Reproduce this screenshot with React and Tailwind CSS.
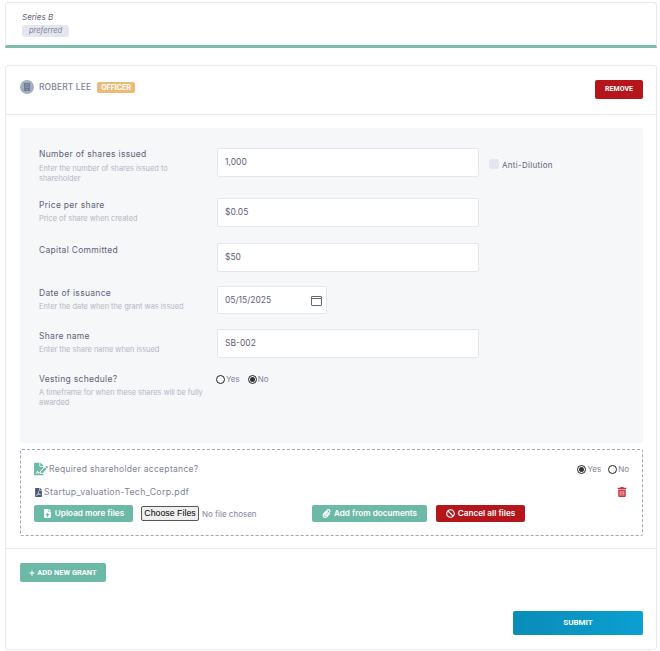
import { FaFileUpload, FaBan, FaTrashAlt, FaPaperclip, FaFilePdf, FaBuilding, FaFileSignature, FaPlus } from "react-icons/fa";

const BODY = "font-['Inter','Liberation_Sans',sans-serif]";
const BTN = "font-['Roboto','Liberation_Sans',sans-serif]";

function Row({ label, hint, className, children, first }) {
  return (
    <div className={`flex ${className}`}>
      <div className="w-[178px] shrink-0 pr-[10px]">
        <div className={`text-[8.5px] leading-[13px] tracking-[0.3px] text-[#5e6278] ${first ? "" : "mt-[1px]"}`}>{label}</div>
        {hint && <div className={`text-[7.4px] leading-[10px] text-[#b5b5c3] ${first ? "mt-[3px]" : "mt-[2px]"}`}>{hint}</div>}
      </div>
      {children}
    </div>
  );
}

function TextBox({ value, height = "h-[29px]" }) {
  return (
    <div className={`w-[262px] ${height} bg-white border border-[#e4e6ef] rounded-[2px] pl-[7px] flex items-center text-[8.5px] text-[#5e6278]`}>
      {value}
    </div>
  );
}

function Radio({ checked, label, color = "text-[#7e8299]" }) {
  return (
    <span className={`flex items-center gap-[1px] text-[8px] ${color}`}>
      <span className="w-[9px] h-[9px] rounded-full border border-[#222] flex items-center justify-center">
        {checked && <span className="w-[5px] h-[5px] rounded-full bg-[#333]" />}
      </span>
      {label}
    </span>
  );
}

export default function App() {
  return (
    <div className={`${BODY} w-[660px] h-[651px] bg-white relative overflow-hidden pt-[2px] pl-[5px]`}>
      <div className="w-[652px] h-[46px] border border-[#e8eaee] border-b-[3px] border-b-[#7dbdae] rounded-t-[3px] pl-[16px] pt-[9px]">
        <div className="text-[8px] leading-[11px] italic text-[#5e6278]">Series B</div>
        <div className="w-fit mt-[2px] px-[7px] h-[12px] leading-[12px] bg-[#e4e6ef] rounded-[3px] text-[7.5px] italic text-[#7e8299]">preferred</div>
      </div>

      <div className="w-[652px] h-[585px] mt-[17px] border border-[#e8eaee] rounded-[3px]">
        <div className="h-[49px] border-b border-[#e8eaee] flex items-start justify-between pl-[14px] pr-[13px]">
          <div className="flex items-center mt-[14px]">
            <span className="w-[14px] h-[14px] rounded-full bg-[#a5adc0] flex items-center justify-center">
              <FaBuilding size={8} className="text-[#6f7a94]" />
            </span>
            <span className="ml-[5px] text-[8.5px] font-medium text-[#7e8299] tracking-[0.1px]">ROBERT LEE</span>
            <span className="ml-[6px] h-[11px] px-[4px] bg-[#ecbb79] rounded-[2px] text-white text-[7px] leading-[11px] font-bold">OFFICER</span>
          </div>
          <button className={`${BTN} mt-[14px] w-[48px] h-[19px] bg-[#b5161b] text-white rounded-[2px] text-[7px] font-bold`}>REMOVE</button>
        </div>

        <div className="px-[14px] pt-[13px]">
          <div className="w-[623px] h-[315px] bg-[#f5f7f9] rounded-[3px] pl-[19px] pt-[20px]">
            <Row first label="Number of shares issued" hint="Enter the number of shares issued to shareholder" className="h-[50px]">
              <TextBox value="1,000" />
              <label className="flex items-start ml-[10px] mt-[11px] text-[8px] text-[#5e6278] tracking-[0.3px]">
                <span className="w-[10px] h-[10px] bg-[#e4e6ef] rounded-[2px] mr-[3px]" />
                <span className="leading-[12px]">Anti-Dilution</span>
              </label>
            </Row>
            <Row label="Price per share" hint="Price of share when created" className="h-[45px]">
              <TextBox value="$0.05" />
            </Row>
            <Row label="Capital Committed" className="h-[43px]">
              <TextBox value="$50" />
            </Row>
            <Row label="Date of issuance" hint="Enter the date when the grant was issued" className="h-[43px]">
              <div className="w-[110px] h-[28px] bg-white border border-[#e4e6ef] rounded-[2px] pl-[7px] pr-[4px] flex items-center justify-between text-[8.5px] text-[#5e6278]">
                05/15/2025
                <svg width="11" height="11" viewBox="0 0 11 11" fill="none" stroke="#666" strokeWidth="1">
                  <rect x="0.5" y="1.5" width="10" height="9" rx="0.5" />
                  <path d="M0.5 3.5H10.5" />
                </svg>
              </div>
            </Row>
            <Row label="Share name" hint="Enter the share name when issued" className="h-[43px]">
              <TextBox value="SB-002" />
            </Row>
            <Row label="Vesting schedule?" hint="A timeframe for when these shares will be fully awarded">
              <div className="flex gap-[8px] h-[12px] -ml-[1px] mt-[1px]">
                <Radio label="Yes" />
                <Radio checked label="No" />
              </div>
            </Row>
          </div>

          <div className="w-[623px] h-[87px] mt-[6px] border border-dashed border-[#a1a5b7] rounded-[2px] pl-[13px] pr-[13px] pt-[12px]">
            <div className="flex items-center justify-between h-[14px]">
              <div className="flex items-center text-[8.5px] tracking-[0.3px] text-[#7e8299]">
                <FaFileSignature size={14} className="text-[#6cb9a8] mr-[1px]" />
                Required shareholder acceptance?
              </div>
              <div className="flex gap-[7px]">
                <Radio checked label="Yes" />
                <Radio label="No" />
              </div>
            </div>
            <div className="flex items-center justify-between h-[12px] mt-[10px]">
              <div className="flex items-center text-[8.8px] tracking-[0.3px] text-[#7e8299]">
                <FaFilePdf size={9} className="text-[#4a5578] mr-[1px]" />
                Startup_valuation-Tech_Corp.pdf
              </div>
              <FaTrashAlt size={10} className="text-[#c8323a] mr-[2px]" />
            </div>
            <div className="flex items-center mt-[7px] h-[17px]">
              <button className="w-[99px] h-[17px] bg-[#6cb9a8] rounded-[2px] text-white text-[8.2px] font-semibold flex items-center justify-center gap-[3px]">
                <FaFileUpload size={9} />
                Upload more files
              </button>
              <span className="ml-[8px] h-[15px] w-[58px] bg-[#efefef] border border-[#555] rounded-[2px] text-[8.8px] leading-[13px] text-black text-center font-['Liberation_Sans',sans-serif]">Choose Files</span>
              <span className="ml-[3px] w-[110px] text-[8px] text-[#7e8299]">No file chosen</span>
              <button className="w-[115px] h-[17px] bg-[#6cb9a8] rounded-[2px] text-white text-[8.2px] font-semibold flex items-center justify-center gap-[3px]">
                <FaPaperclip size={9} />
                Add from documents
              </button>
              <button className="ml-[9px] w-[89px] h-[17px] bg-[#b5161b] rounded-[2px] text-white text-[8.2px] font-semibold flex items-center justify-center gap-[3px]">
                <FaBan size={9} />
                Cancel all files
              </button>
            </div>
          </div>
        </div>

        <div className="mt-[12px] border-t border-[#e8eaee] pl-[14px] pr-[13px] pt-[14px]">
          <button className={`${BTN} w-[86px] h-[19px] bg-[#6cb9a8] rounded-[2px] text-white text-[7.5px] font-bold flex items-center justify-center gap-[2px]`}>
            <FaPlus size={6} />
            ADD NEW GRANT
          </button>
          <div className="flex justify-end mt-[29px]">
            <button className={`${BTN} w-[130px] h-[24px] rounded-[2px] text-white text-[8px] font-bold bg-gradient-to-r from-[#0a8cb8] to-[#0ba0d0]`}>SUBMIT</button>
          </div>
        </div>
      </div>
    </div>
  );
}
